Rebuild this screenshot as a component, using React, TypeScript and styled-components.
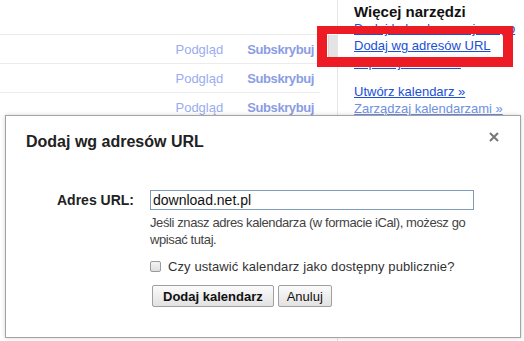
import React from "react";
import styled, { createGlobalStyle } from "styled-components";

const GlobalStyle = createGlobalStyle`
  html, body {
    margin: 0;
    padding: 0;
    background: #fff;
    font-family: Arial, "Liberation Sans", sans-serif;
  }
`;

const Page = styled.div`
  position: relative;
  width: 524px;
  height: 341px;
  overflow: hidden;
  display: flex;
  background: #fff;
`;

const Main = styled.div`
  display: flex;
  width: 337px;
  border-right: 1px solid #e6e6e6;
`;

const Rows = styled.div`
  width: 320px;
  padding-top: 34px;
`;

const Row = styled.div`
  height: 28px;
  border-top: 1px solid #ececec;
  display: flex;
  align-items: center;
  justify-content: flex-end;
  gap: 24px;
  padding-right: 6px;
  font-size: 13px;
`;

const RowLink = styled.span<{ $bold?: boolean }>`
  color: ${(p) => (p.$bold ? "#8a9de4" : "#9aacef")};
  font-weight: ${(p) => (p.$bold ? "bold" : "normal")};
  letter-spacing: ${(p) => (p.$bold ? "-0.4px" : "0")};
`;

const Gutter = styled.div`
  width: 17px;
  padding-top: 35px;
  display: flex;
  justify-content: flex-end;
`;

const Thumb = styled.div`
  width: 8px;
  height: 24px;
  background: #e4e4e4;
  border-left: 1px solid #d6d6d6;
`;

const Sidebar = styled.div`
  padding: 3px 0 0 16px;
  display: flex;
  flex-direction: column;
`;

const SideTitle = styled.div`
  font-size: 15px;
  font-weight: bold;
  color: #111;
  line-height: 17px;
`;

const SideLink = styled.a<{ $faded?: boolean; $gap?: number }>`
  font-size: 13px;
  line-height: 17px;
  color: ${(p) => (p.$faded ? "#6e8fe2" : "#1a4fd6")};
  text-decoration: underline;
  margin-top: ${(p) => p.$gap ?? 0}px;
  white-space: nowrap;
`;

const Highlight = styled.div`
  position: absolute;
  left: 317px;
  top: 26px;
  width: 176px;
  height: 23px;
  border: 10px solid #ed1c24;
  border-top-width: 8px;
  border-bottom-width: 10px;
`;

const Dialog = styled.div`
  position: absolute;
  left: 5px;
  top: 115px;
  width: 514px;
  height: 221px;
  background: #fff;
  border: 1px solid #a4a4a4;
  box-shadow: 0 0 4px rgba(0, 0, 0, 0.18);
`;

const Header = styled.div`
  display: flex;
  justify-content: space-between;
  align-items: flex-start;
  padding: 16px 21px 0 20px;
`;

const Title = styled.h2`
  margin: 0;
  font-size: 16px;
  font-weight: bold;
  color: #222;
  line-height: 19px;
`;

const Close = styled.button`
  border: 0;
  background: none;
  padding: 0;
  width: 10px;
  height: 10px;
  display: flex;
`;

const Form = styled.div`
  display: grid;
  grid-template-columns: 128px 324px;
  column-gap: 16px;
  margin-top: 39px;
`;

const Label = styled.label`
  text-align: right;
  font-size: 14px;
  font-weight: bold;
  color: #222;
  line-height: 20px;
`;

const Field = styled.div`
  display: flex;
  flex-direction: column;
`;

const Input = styled.input`
  box-sizing: border-box;
  width: 324px;
  height: 20px;
  border: 1px solid #7f9db9;
  padding: 0 2px;
  font-size: 14px;
  font-family: Arial, "Liberation Sans", sans-serif;
  color: #111;
  outline: none;
`;

const Help = styled.p`
  margin: 4px 0 0;
  font-size: 13px;
  line-height: 17px;
  color: #444;
  letter-spacing: -0.4px;
  white-space: nowrap;
`;

const CheckRow = styled.label`
  display: flex;
  align-items: center;
  gap: 7px;
  margin-top: 11px;
  font-size: 13px;
  color: #333;
  letter-spacing: 0.1px;
`;

const Box = styled.span`
  width: 11px;
  height: 11px;
  box-sizing: border-box;
  border: 1px solid #9a9a9a;
  border-radius: 2px;
  background: linear-gradient(#f4f4f4, #dedede);
`;

const Buttons = styled.div`
  display: flex;
  gap: 4px;
  margin-top: 11px;
  margin-left: 2px;
`;

const Button = styled.button<{ $primary?: boolean }>`
  height: 22px;
  padding: 0 ${(p) => (p.$primary ? 10 : 8)}px;
  border: 1px solid #a0a0a0;
  border-radius: 2px;
  background: linear-gradient(#fbfbfb, #e2e2e2);
  font-family: Arial, "Liberation Sans", sans-serif;
  font-size: 13px;
  font-weight: ${(p) => (p.$primary ? "bold" : "normal")};
  color: #111;
`;

const rows = [0, 1, 2];

export default function App() {
  return (
    <Page>
      <GlobalStyle />
      <Main>
        <Rows>
          {rows.map((r) => (
            <Row key={r}>
              <RowLink>Podgląd</RowLink>
              <RowLink $bold>Subskrybuj</RowLink>
            </Row>
          ))}
        </Rows>
        <Gutter>
          <Thumb />
        </Gutter>
      </Main>
      <Sidebar>
        <SideTitle>Więcej narzędzi</SideTitle>
        <SideLink>Dodaj kalendarz znajomego</SideLink>
        <SideLink>Dodaj wg adresów URL</SideLink>
        <SideLink>Importuj kalendarz</SideLink>
        <SideLink $gap={12}>Utwórz kalendarz »</SideLink>
        <SideLink $faded>Zarządzaj kalendarzami »</SideLink>
      </Sidebar>
      <Highlight />
      <Dialog>
        <Header>
          <Title>Dodaj wg adresów URL</Title>
          <Close aria-label="Zamknij">
            <svg width="10" height="10" viewBox="0 0 10 10">
              <path d="M1 1L9 9M9 1L1 9" stroke="#777" strokeWidth="2" />
            </svg>
          </Close>
        </Header>
        <Form>
          <Label>Adres URL:</Label>
          <Field>
            <Input defaultValue="download.net.pl" />
            <Help>
              Jeśli znasz adres kalendarza (w formacie iCal), możesz go
              <br />
              wpisać tutaj.
            </Help>
            <CheckRow>
              <Box />
              Czy ustawić kalendarz jako dostępny publicznie?
            </CheckRow>
            <Buttons>
              <Button $primary>Dodaj kalendarz</Button>
              <Button>Anuluj</Button>
            </Buttons>
          </Field>
        </Form>
      </Dialog>
    </Page>
  );
}
